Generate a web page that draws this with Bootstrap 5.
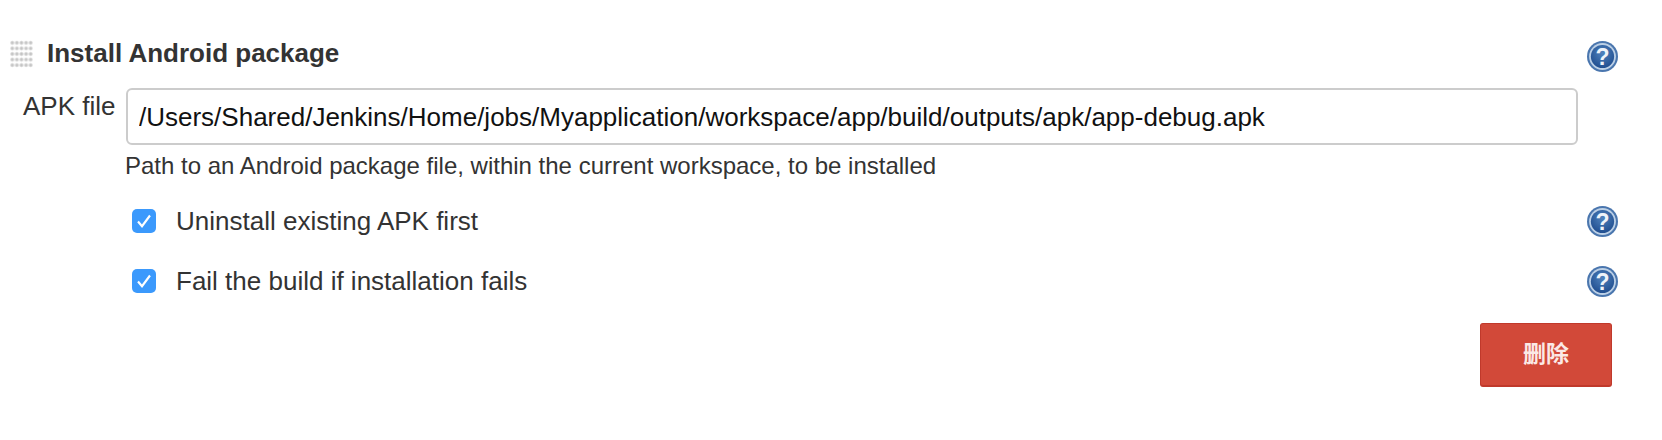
<!DOCTYPE html>
<html lang="en">
<head>
  <meta charset="UTF-8" />
  <title>Install Android package</title>
  <link href="https://cdn.jsdelivr.net/npm/bootstrap@5.3.0/dist/css/bootstrap.min.css" rel="stylesheet"/>
  <style>
    body {
      font-family: "Liberation Sans", Arial, sans-serif;
      color: #333;
      background: #fff;
    }
    .build-step {
      padding: 37px 50px 0 10px;
    }
    .drag-handle {
      width: 23px;
      height: 28px;
      margin-top: 3px;
      background-image: radial-gradient(circle at 50% 50%, #bdbdbd 0, #d0d0d0 1.3px, #fff 2.5px);
      background-size: 4.6px 5.6px;
    }
    .step-title {
      font-size: 26px;
      font-weight: 700;
      line-height: 28px;
      margin: 2px 0 0 14px;
      color: #333;
    }
    .help-icon {
      width: 33px;
      height: 33px;
      flex: none;
      margin-right: -6.5px;
      display: block;
    }
    .help-top {
      margin-top: 3px;
    }
    .apk-row {
      margin-top: 15px;
    }
    .apk-label {
      width: 116px;
      padding: 0 0 0 13px;
      font-size: 26px;
      line-height: 30px;
      margin-top: 3px;
      flex: none;
    }
    .apk-input.form-control {
      width: 1452px;
      height: 57px;
      border: 2px solid #ccc;
      border-radius: 6px;
      padding: 2px 11px 0;
      font-size: 26px;
      color: #111;
      box-shadow: none;
    }
    .apk-hint {
      font-size: 24px;
      line-height: 26px;
      margin: 8px 0 0 115px;
    }
    .opt-row {
      height: 60px;
      padding-left: 122px;
    }
    .opt-first {
      margin-top: 12px;
    }
    .opt-box {
      width: 24px;
      height: 24px;
      border-radius: 5px;
      background: #3b99fc;
      flex: none;
    }
    .opt-label {
      font-size: 26px;
      margin-left: 20px;
    }
    .del-btn.btn {
      width: 132px;
      height: 64px;
      background: #d24939;
      border: 1px solid #c0392b;
      border-bottom-width: 2px;
      border-radius: 3px;
      color: #fbe9e6;
      font-family: "Liberation Sans", "Noto Sans CJK SC", sans-serif;
      font-size: 23px;
      font-weight: 700;
      padding: 0;
    }
    .del-wrap {
      margin-top: 12px;
    }
  </style>
</head>
<body>
  <svg width="0" height="0" class="d-block">
    <defs>
      <radialGradient id="helpFill" cx="50%" cy="35%" r="70%">
        <stop offset="0" stop-color="#4f82bd"/>
        <stop offset="1" stop-color="#1d4a8c"/>
      </radialGradient>
      <symbol id="helpMark" viewBox="0 0 33 33">
        <circle cx="16.5" cy="16.5" r="15.5" fill="#4a76ae"/>
        <circle cx="16.5" cy="16.5" r="13.4" fill="#bcd0e6"/>
        <circle cx="16.5" cy="16.5" r="11.6" fill="url(#helpFill)"/>
        <text x="16.5" y="25" text-anchor="middle" font-family="Liberation Sans, sans-serif" font-weight="700" font-size="23" fill="#eef3f9">?</text>
      </symbol>
    </defs>
  </svg>

  <div class="build-step">
    <div class="d-flex align-items-start justify-content-between">
      <div class="d-flex align-items-start">
        <div class="drag-handle"></div>
        <h2 class="step-title">Install Android package</h2>
      </div>
      <svg class="help-icon help-top"><use href="#helpMark"/></svg>
    </div>

    <div class="d-flex align-items-start apk-row">
      <label class="apk-label" for="apk">APK file</label>
      <input id="apk" type="text" class="form-control apk-input" value="/Users/Shared/Jenkins/Home/jobs/Myapplication/workspace/app/build/outputs/apk/app-debug.apk"/>
    </div>
    <div class="apk-hint">Path to an Android package file, within the current workspace, to be installed</div>

    <div class="d-flex align-items-center justify-content-between opt-row opt-first">
      <div class="d-flex align-items-center">
        <div class="opt-box d-flex align-items-center justify-content-center">
          <svg width="16" height="16" viewBox="0 0 16 16"><path d="M2 8.5l4 4.7L14 2.5" fill="none" stroke="#fff" stroke-width="2.1"/></svg>
        </div>
        <span class="opt-label">Uninstall existing APK first</span>
      </div>
      <svg class="help-icon"><use href="#helpMark"/></svg>
    </div>
    <div class="d-flex align-items-center justify-content-between opt-row">
      <div class="d-flex align-items-center">
        <div class="opt-box d-flex align-items-center justify-content-center">
          <svg width="16" height="16" viewBox="0 0 16 16"><path d="M2 8.5l4 4.7L14 2.5" fill="none" stroke="#fff" stroke-width="2.1"/></svg>
        </div>
        <span class="opt-label">Fail the build if installation fails</span>
      </div>
      <svg class="help-icon"><use href="#helpMark"/></svg>
    </div>

    <div class="d-flex justify-content-end del-wrap">
      <button type="button" class="btn del-btn">删除</button>
    </div>
  </div>
</body>
</html>
